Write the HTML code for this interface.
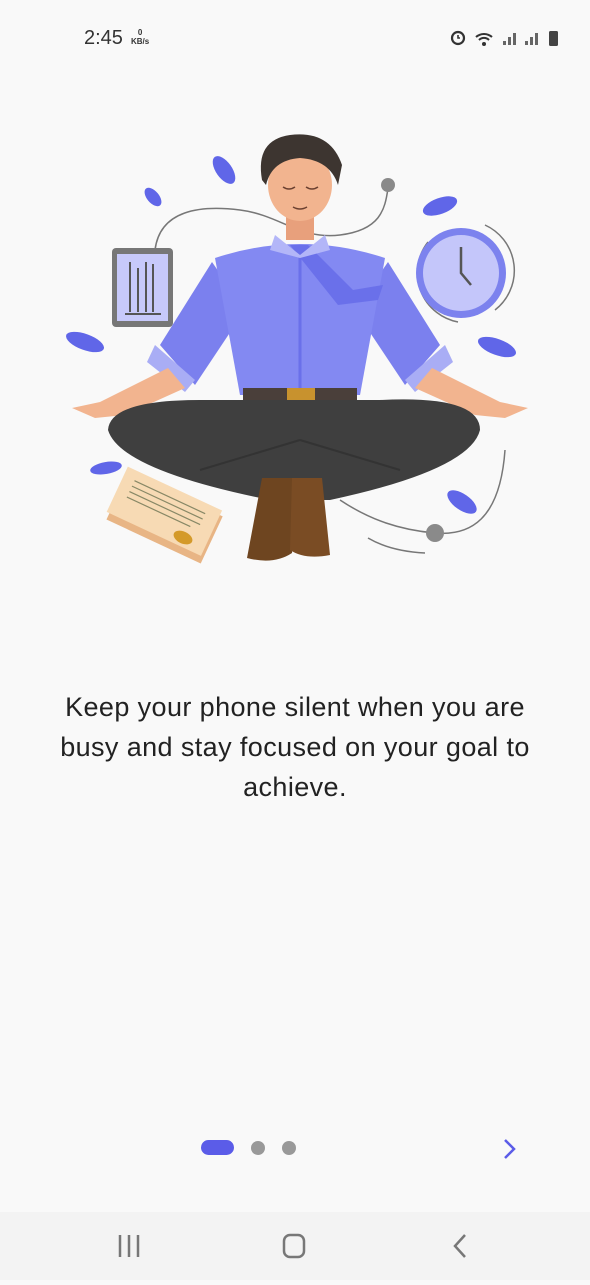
<!DOCTYPE html>
<html><head><meta charset="utf-8"><style>
html,body{margin:0;padding:0;}
body{width:590px;height:1280px;background:#f9f9f9;position:relative;overflow:hidden;font-family:"Liberation Sans",sans-serif;}
.time{position:absolute;left:84px;top:27px;font-size:20px;color:#333;}
.kb{position:absolute;left:131px;top:28px;font-size:8px;color:#333;text-align:center;line-height:9px;font-weight:bold}
.txt{position:absolute;left:0;width:590px;top:687px;text-align:center;font-size:27px;letter-spacing:0.4px;line-height:40px;color:#222;}
.nav{position:absolute;left:0;top:1212px;width:590px;height:68px;background:#f3f3f3;}
</style></head><body>
<div class="time">2:45</div>
<div class="kb">0<br>KB/s</div>
<svg style="position:absolute;left:448px;top:28px" width="115" height="20" viewBox="0 0 115 20">
<circle cx="10" cy="10" r="6" fill="none" stroke="#333" stroke-width="2.2"/><path d="M10 7v3h2" stroke="#333" stroke-width="1.6" fill="none"/>
<path d="M28 9a12 12 0 0 1 16 0M31 12a7 7 0 0 1 10 0" stroke="#333" stroke-width="2" fill="none"/><circle cx="36" cy="16" r="2" fill="#333"/>
<path d="M55 17h3v-4h-3zM60 17h3v-8h-3zM65 17h3v-12h-3z" fill="#666"/>
<path d="M77 17h3v-4h-3zM82 17h3v-8h-3zM87 17h3v-12h-3z" fill="#666"/>
<rect x="101" y="3" width="9" height="15" rx="1.5" fill="#444"/>
</svg>
<svg style="position:absolute;left:0;top:0" width="590" height="600" viewBox="0 0 590 600">
<g fill="none" stroke="#777" stroke-width="1.5">
<path d="M155 250C160 210 200 205 240 210S300 240 340 235S385 210 388 188"/>
<path d="M428 242a50 50 0 0 0 30 80"/><path d="M485 225a50 50 0 0 1 10 85"/>
<path d="M340 500C370 520 400 530 435 533S500 520 505 450"/>
<path d="M368 538C385 548 405 552 425 553"/>
</g>
<circle cx="388" cy="185" r="7" fill="#8a8a8a"/><circle cx="435" cy="533" r="9" fill="#8a8a8a"/>
<circle cx="461" cy="273" r="45" fill="#7c82ee"/><circle cx="461" cy="273" r="38" fill="#c4c6fa"/>
<path d="M461 247v26l10 12" stroke="#555" stroke-width="2.5" fill="none"/>
<rect x="112" y="248" width="61" height="79" rx="4" fill="#777"/><rect x="117" y="254" width="51" height="67" fill="#c7c9fa"/>
<path d="M130 262v50M138 268v44M146 262v50M153 264v48M125 314h36" stroke="#555" stroke-width="2"/>
<g fill="#6066e8">
<ellipse cx="224" cy="170" rx="8" ry="16" transform="rotate(-35 224 170)"/>
<ellipse cx="153" cy="197" rx="6" ry="11" transform="rotate(-40 153 197)"/>
<ellipse cx="440" cy="206" rx="18" ry="8" transform="rotate(-20 440 206)"/>
<ellipse cx="85" cy="342" rx="20" ry="8" transform="rotate(20 85 342)"/>
<ellipse cx="497" cy="347" rx="20" ry="8" transform="rotate(20 497 347)"/>
<ellipse cx="106" cy="468" rx="16" ry="6" transform="rotate(-10 106 468)"/>
<ellipse cx="462" cy="502" rx="17" ry="8" transform="rotate(35 462 502)"/>
</g>
<g transform="rotate(25 165 517)"><rect x="113" y="492" width="104" height="52" fill="#e8b585"/><rect x="110" y="487" width="104" height="50" fill="#f7dab4"/>
<path d="M122 497h78M122 503h78M122 509h78M122 515h70" stroke="#886" stroke-width="1.2"/><ellipse cx="190" cy="528" rx="10" ry="6" fill="#d49a2a"/></g>
<path d="M212 262L160 345L195 385L245 310Z" fill="#7b80ee"/><path d="M388 262L440 345L405 385L355 310Z" fill="#7b80ee"/>
<path d="M215 258Q300 230 385 258L360 395H240Z" fill="#8389f2"/>
<path d="M155 345l40 35-10 12-38-30z" fill="#a9adf5"/><path d="M445 345l-40 35 10 12 38-30z" fill="#a9adf5"/>
<path d="M300 250v140" stroke="#6a70ea" stroke-width="3"/>
<path d="M290 245l18 0 45 45 30 -5-5 15-40 5z" fill="#6a70ea"/>
<path d="M275 235l25 20 25-20 5 15-30 8-30-8z" fill="#b3b6f8"/>
<path d="M168 368L100 402L72 408L95 418L125 415L185 388Z" fill="#f2b48f"/>
<path d="M432 368L500 402L528 408L505 418L475 415L415 388Z" fill="#f2b48f"/>
<rect x="286" y="205" width="28" height="35" fill="#e8a07c"/>
<ellipse cx="300" cy="185" rx="32" ry="36" fill="#f2b48f"/>
<path d="M262 180Q255 140 290 135Q330 130 342 165L338 185Q330 160 300 158Q272 160 266 185Z" fill="#3d3530"/>
<path d="M283 187q6 4 12 0M306 187q6 4 12 0M293 207q7 4 14 0" stroke="#6b4030" stroke-width="1.5" fill="none"/>
<rect x="243" y="388" width="114" height="14" fill="#4a3f3a"/><rect x="287" y="388" width="28" height="15" fill="#c8922e"/>
<path d="M245 400H355L380 400Q480 395 480 430Q470 470 330 500H270Q120 470 108 430Q110 400 200 400Z" fill="#3f3f3f"/>
<path d="M300 440L200 470M300 440L400 470" stroke="#333" stroke-width="2"/>
<path d="M262 478h35l-5 75q-18 12-45 5z" fill="#6e4520"/><path d="M292 478h30l8 77q-25 5-40-5z" fill="#7a4c24"/>
</svg>
<div class="txt">Keep your phone silent when you are<br>busy and stay focused on your goal to<br>achieve.</div>
<div style="position:absolute;left:201px;top:1140px;width:33px;height:15px;border-radius:8px;background:#5b5ce8"></div>
<div style="position:absolute;left:251px;top:1141px;width:14px;height:14px;border-radius:50%;background:#999"></div>
<div style="position:absolute;left:282px;top:1141px;width:14px;height:14px;border-radius:50%;background:#999"></div>
<svg style="position:absolute;left:500px;top:1137px" width="20" height="24"><path d="M5 3l9 9-9 9" stroke="#5b5ce8" stroke-width="2.5" fill="none"/></svg>
<div class="nav">
<svg width="590" height="68"><g stroke="#777" stroke-width="2.5" fill="none">
<path d="M120 23v22M129 23v22M138 23v22"/><rect x="284" y="23" width="20" height="22" rx="6"/><path d="M465 23l-10 11 10 11"/></g></svg>
</div>
</body></html>
